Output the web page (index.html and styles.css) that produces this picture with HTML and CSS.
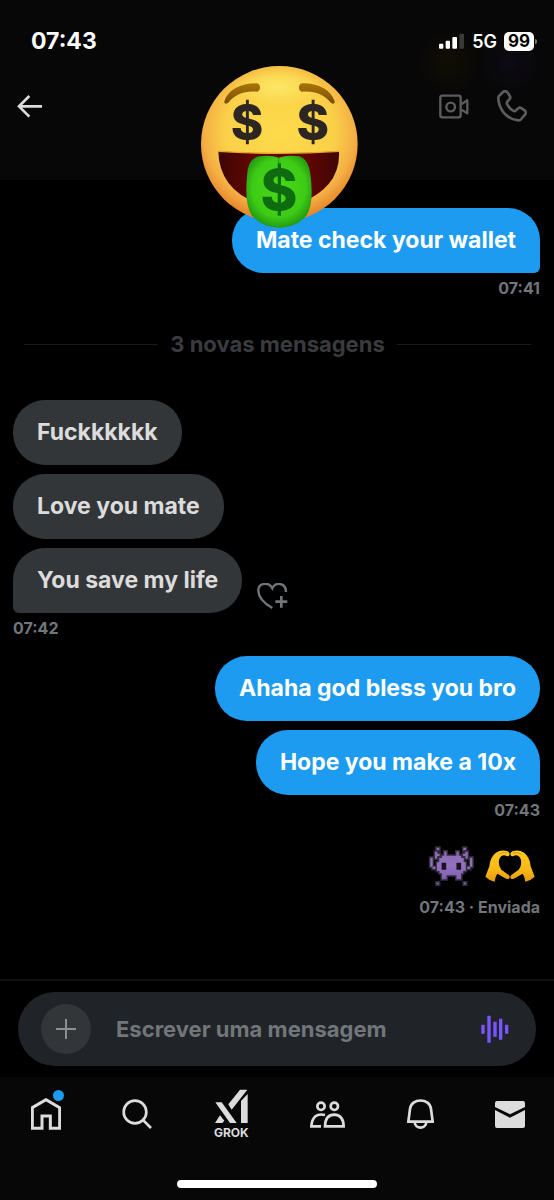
FILE: index.html
```html
<!DOCTYPE html>
<html lang="pt">

<head>
    <meta charset="UTF-8" />
    <meta name="viewport" content="width=device-width, initial-scale=1" />
    <title>Mensagens</title>
    <link rel="stylesheet" href="styles.css">
</head>

<body>

    <header class="top">
        <div class="status-bar">
            <span class="clock">07:43</span>
            <div class="status-right">
                <svg width="26" height="16" viewBox="59 37 78 48" fill="#fff">
                    <rect x="59" y="69" width="13" height="15" rx="3" />
                    <rect x="79" y="60" width="13" height="24" rx="3" />
                    <rect x="99" y="49" width="14" height="35" rx="3" />
                    <rect x="120" y="39" width="14" height="45" rx="3" fill="#3a3a3a" />
                </svg>
                <span class="network">5G</span>
                <span class="battery">99</span>
            </div>
        </div>

        <div class="chat-bar">
            <button class="icon-btn" aria-label="Voltar">
                <svg width="26" height="23" viewBox="48 285 78 69" fill="none" stroke="#dcdcdc" stroke-width="8">
                    <path d="M123 319H56M85 288L54 319L85 350" />
                </svg>
            </button>
            <div class="call-actions">
                <button class="icon-btn" aria-label="Videochamada">
                    <svg width="30" height="25" viewBox="57 221 90 75" fill="none" stroke="#5c5c5c" stroke-width="7" stroke-linejoin="round">
                        <rect x="61" y="226" width="61" height="65" rx="6" />
                        <circle cx="92" cy="260" r="13" />
                        <path d="M124 252L142 240V279L124 268" />
                    </svg>
                </button>
                <button class="icon-btn" aria-label="Chamada de voz">
                    <svg width="30" height="32" viewBox="232 209 90 96" fill="none" stroke="#5c5c5c" stroke-width="8" stroke-linejoin="round">
                        <path d="M238 227L250 215Q257 209 263 216L270 226Q274 232 269 237L263 244Q260 248 263 253Q270 266 280 271Q285 274 289 270L296 264Q300 260 306 264L316 271Q321 277 316 283L305 296Q301 301 295 300Q269 297 252 277Q236 255 236 232Q236 229 238 227Z" />
                    </svg>
                </button>
            </div>
        </div>

        <svg class="avatar" width="157" height="162" viewBox="33 32 471 486" role="img" aria-label="Avatar">
            <defs>
                <radialGradient id="face" cx="50%" cy="42%" r="57%">
                    <stop offset="0" stop-color="#fcdb4a" />
                    <stop offset=".62" stop-color="#fad048" />
                    <stop offset=".84" stop-color="#f4b045" />
                    <stop offset="1" stop-color="#e8862c" />
                </radialGradient>
                <radialGradient id="shine">
                    <stop offset="0" stop-color="#fde766" />
                    <stop offset="1" stop-color="#fde766" stop-opacity="0" />
                </radialGradient>
                <linearGradient id="mouth">
                    <stop offset="0" stop-color="#3c0705" />
                    <stop offset=".3" stop-color="#660503" />
                    <stop offset=".7" stop-color="#660503" />
                    <stop offset="1" stop-color="#3c0705" />
                </linearGradient>
                <linearGradient id="brow" x2="0" y2="1">
                    <stop offset="0" stop-color="#a87507" />
                    <stop offset="1" stop-color="#7d4c05" />
                </linearGradient>
                <radialGradient id="tongue" cy="45%" r="58%">
                    <stop offset="0" stop-color="#48da18" />
                    <stop offset=".7" stop-color="#3ecb16" />
                    <stop offset="1" stop-color="#1f9411" />
                </radialGradient>
            </defs>
            <ellipse cx="268" cy="266" rx="235" ry="234" fill="url(#face)" />
            <ellipse cx="265" cy="95" rx="130" ry="55" fill="url(#shine)" />
            <path d="M103 138C114 103 153 83 201 84C213 87 213 106 202 109C164 105 136 117 117 139C109 148 102 146 103 138Z" fill="url(#brow)" />
            <path d="M434 138C423 103 384 83 336 84C324 87 324 106 335 109C373 105 401 117 420 139C428 148 435 146 434 138Z" fill="url(#brow)" />
            <path d="M85 288Q268 300 447 288Q450 345 416 386Q360 449 268 451Q166 449 115 382Q86 343 85 288Z" fill="url(#mouth)" />
            <path d="M85 288Q268 300 447 288" fill="none" stroke="#e9a42b" stroke-width="4" />
            <path d="M171 362Q173 302 217 302Q246 299 266 307Q287 299 319 302Q354 303 361 356Q373 442 350 480Q320 517 268 517Q213 516 184 478Q163 443 171 362Z" fill="url(#tongue)" />
            <path d="M266 308V350" stroke="#2aa514" stroke-width="4" />
            <text class="dollar" x="171" y="254" text-anchor="middle" font-size="148" fill="#2c2521">$</text>
            <text class="dollar" x="368" y="254" text-anchor="middle" font-size="148" fill="#2c2521">$</text>
            <text class="dollar" x="267" y="463" text-anchor="middle" font-size="168" fill="#0e6b10">$</text>
        </svg>
    </header>

    <main class="chat">
        <div class="group mine">
            <div class="bubble tail">Mate check your wallet</div>
            <div class="time">07:41</div>
        </div>

        <div class="divider">3 novas mensagens</div>

        <div class="group theirs">
            <div class="bubble">Fuckkkkkk</div>
            <div class="bubble">Love you mate</div>
            <div class="bubble-row">
                <div class="bubble tail">You save my life</div>
                <button class="icon-btn react" aria-label="Reagir">
                    <svg width="31" height="27" viewBox="770 578 93 81" fill="none" stroke="#71767b" stroke-width="7">
                        <path d="M816 653Q775 630 774 602C773 577 806 573 816 594C825 574 857 576 857 605" />
                        <path d="M843 617V652M825 634H861" stroke-width="8" />
                    </svg>
                </button>
            </div>
            <div class="time">07:42</div>
        </div>

        <div class="group mine">
            <div class="bubble">Ahaha god bless you bro</div>
            <div class="bubble tail">Hope you make a 10x</div>
            <div class="time">07:43</div>
        </div>

        <div class="group mine">
            <div class="emojis">
                <svg width="49" height="40" viewBox="35 37 148 120" role="img" aria-label="Alien">
                    <defs>
                        <linearGradient id="alien" gradientUnits="userSpaceOnUse" x1="0" y1="40" x2="0" y2="150">
                            <stop offset="0" stop-color="#8a66b4" />
                            <stop offset=".5" stop-color="#9272c0" />
                            <stop offset="1" stop-color="#7d59ae" />
                        </linearGradient>
                    </defs>
                    <g fill="url(#alien)" stroke="#332d3b" stroke-width="9" paint-order="stroke">
                        <path d="M64 42H72V50H64ZM145 42H153V50H145ZM64 147H71V153H64ZM146 147H153V153H146Z" />
                        <path d="M59 54H66V60H73V67H66V74H59ZM158 54H151V60H144V67H151V74H158Z" />
                        <path d="M45 72H52V99H64V106H52V99H45ZM172 72H165V99H153V106H165V99H172Z" />
                        <path d="M87 53H94V66H124V53H131V66H138V73H146V86H152V112H144V119H138V137H124V125H94V137H80V119H73V112H65V86H72V73H80V66H87Z" />
                    </g>
                    <path d="M79 87H93V108H79ZM124 87H138V108H124Z" fill="#191320" />
                </svg>
                <svg width="52" height="34" viewBox="6 12 156 102" role="img" aria-label="Mãos em coração">
                    <defs>
                        <linearGradient id="handFill" x2="0" y2="1">
                            <stop offset="0" stop-color="#ffca20" />
                            <stop offset=".6" stop-color="#f9b917" />
                            <stop offset="1" stop-color="#e9990f" />
                        </linearGradient>
                        <g id="hand">
                            <path d="M10 95L22 64Q24 36 42 23Q58 12 77 19Q85 24 82 31Q79 36 72 32Q58 28 52 42Q47 60 58 74L80 90Q86 96 81 101Q76 104 67 98L46 86Q40 94 38 110Q22 107 10 95Z" fill="url(#handFill)" />
                            <path d="M50 28Q61 20 76 24" fill="none" stroke="#dd940e" stroke-width="3" />
                        </g>
                    </defs>
                    <use href="#hand" />
                    <use href="#hand" transform="translate(168) scale(-1 1)" />
                </svg>
            </div>
            <div class="time">07:43 · Enviada</div>
        </div>
    </main>

    <form class="composer">
        <div class="composer-box">
            <button type="button" class="plus" aria-label="Adicionar">
                <svg width="20" height="20" viewBox="0 0 20 20" stroke="#8b8e92" stroke-width="2">
                    <path d="M10 0V20M0 10H20" />
                </svg>
            </button>
            <input type="text" placeholder="Escrever uma mensagem" aria-label="Escrever uma mensagem" />
            <button type="button" class="icon-btn" aria-label="Mensagem de voz">
                <svg width="28" height="28" viewBox="612 133 84 84" stroke="#7856ff" stroke-width="10">
                    <path d="M618 162V189M636 135V216M654 153V198M671 144V207M689 162V189" />
                </svg>
            </button>
        </div>
    </form>

    <footer class="bottom">
        <nav class="tabs">
            <a href="#" class="tab" aria-label="Início">
                <span class="home">
                    <svg width="30" height="32" viewBox="93 379 90 96" fill="none" stroke="#dcdcdc" stroke-width="9">
                        <path d="M97 408L138 384L179 408V470H151V433H126V470H97Z" />
                    </svg>
                    <span class="dot"></span>
                </span>
            </a>
            <a href="#" class="tab" aria-label="Pesquisar">
                <svg width="30" height="30" viewBox="372 383 90 90" fill="none" stroke="#dcdcdc" stroke-width="8">
                    <circle cx="411" cy="422" r="34" />
                    <path d="M436 447L459 470" />
                </svg>
            </a>
            <a href="#" class="tab grok">
                <svg width="33" height="35" viewBox="649 359 99 105" fill="#dcdcdc">
                    <path d="M650 399H669L714 461H694ZM664 438L677 454L671 461H649ZM724 361H746L699 421L689 405ZM727 395L747 374V461H727Z" />
                </svg>
                <span>GROK</span>
            </a>
            <a href="#" class="tab" aria-label="Comunidades">
                <svg width="35" height="27" viewBox="93 389 105 81" fill="none" stroke="#dcdcdc" stroke-width="8">
                    <circle cx="126" cy="405" r="11" />
                    <circle cx="166" cy="405" r="11" />
                    <path d="M138 431Q101 422 97 465H126" />
                    <path d="M138 465Q139 430 166 430Q193 431 194 465Z" />
                </svg>
            </a>
            <a href="#" class="tab" aria-label="Notificações">
                <svg width="27" height="30" viewBox="384 384 81 90" fill="none" stroke="#dcdcdc" stroke-width="8">
                    <path d="M388 452L393 414C396 380 453 380 456 414L461 452Z" />
                    <path d="M407 454C409 475 440 475 442 454" />
                </svg>
            </a>
            <a href="#" class="tab" aria-label="Mensagens">
                <svg width="30" height="27" viewBox="653 389 90 81" fill="#dcdcdc">
                    <path d="M653 407V395Q653 389 659 389H737Q743 389 743 395V407L698 429ZM653 416L698 439L743 416V464Q743 470 737 470H659Q653 470 653 464Z" />
                </svg>
            </a>
        </nav>
        <div class="home-indicator"></div>
    </footer>

</body>

</html>
```
FILE: styles.css
```css
* {
    box-sizing: border-box;
}

body {
    margin: 0;
    min-height: 100vh;
    display: flex;
    flex-direction: column;
    background: #000;
    color: #fff;
    font-family: Inter, "Liberation Sans", sans-serif;
    font-weight: 700;
}

svg {
    display: block;
}

button {
    padding: 0;
    border: none;
    background: none;
    cursor: pointer;
}

/* header */
.top {
    position: relative;
    height: 180px;
    padding-top: 24px;
    background:
        radial-gradient(circle at 81% 62px, #110e03, transparent 32px),
        radial-gradient(circle at 92% 62px, #0d0a14, transparent 32px),
        #070707;
}

.status-bar {
    display: flex;
    justify-content: space-between;
    align-items: center;
    height: 34px;
    padding: 0 20px 0 31px;
}

.clock {
    font-size: 23px;
}

.status-right {
    display: flex;
    align-items: center;
    gap: 7px;
}

.network {
    font-size: 18px;
    font-weight: 600;
}

.battery {
    position: relative;
    width: 30px;
    height: 19px;
    border-radius: 5px;
    background: #fff;
    color: #000;
    font-size: 17px;
    line-height: 19px;
    text-align: center;
}

.battery::after {
    content: "";
    position: absolute;
    top: 7px;
    right: -3px;
    width: 2px;
    height: 5px;
    border-radius: 0 2px 2px 0;
    background: #777;
}

.chat-bar {
    display: flex;
    justify-content: space-between;
    align-items: center;
    height: 96px;
    padding: 0 27px 0 17px;
}

.call-actions {
    display: flex;
    align-items: center;
    gap: 28px;
}

.avatar {
    position: absolute;
    top: 66px;
    left: 50%;
    margin-left: -76px;
    z-index: 1;
}

.dollar {
    font-family: Inter, sans-serif;
    font-weight: 800;
}

/* messages */
.chat {
    flex: 1;
    padding: 28px 14px 0 13px;
}

.group {
    display: flex;
    flex-direction: column;
    align-items: flex-start;
    gap: 9px;
    margin-bottom: 18px;
}

.mine {
    align-items: flex-end;
}

.bubble {
    padding: 18px 24px 19px;
    border-radius: 32px;
    background: #333639;
    color: #dcdcdc;
    font-size: 23px;
    line-height: 28px;
}

.mine .bubble {
    background: #1d9bf0;
    color: #fff;
}

.theirs .tail {
    border-bottom-left-radius: 6px;
}

.mine .tail {
    border-bottom-right-radius: 6px;
}

.bubble-row {
    display: flex;
    align-items: flex-end;
    gap: 15px;
}

.react {
    margin-bottom: 3px;
}

.time {
    margin-top: -4px;
    color: #71767b;
    font-size: 16px;
    line-height: 20px;
}

.divider {
    display: flex;
    align-items: center;
    gap: 12px;
    margin: 32px 9px 42px 11px;
    color: #3a3b3e;
    font-size: 22px;
    line-height: 28px;
}

.divider::before,
.divider::after {
    content: "";
    flex: 1;
    height: 1px;
    background: #191a1c;
}

.emojis {
    display: flex;
    align-items: center;
    gap: 8px;
    margin: 8px 4px 6px 0;
}

/* message box */
.composer {
    padding: 11px 18px;
    border-top: 2px solid #101112;
}

.composer-box {
    display: flex;
    align-items: center;
    height: 74px;
    padding: 0 27px 0 23px;
    border-radius: 37px;
    background: #202327;
}

.plus {
    display: flex;
    align-items: center;
    justify-content: center;
    width: 50px;
    height: 50px;
    border-radius: 50%;
    background: #333639;
}

.composer input {
    flex: 1;
    min-width: 0;
    padding: 0 0 0 25px;
    border: none;
    outline: none;
    background: none;
    color: #fff;
    font: inherit;
    font-size: 22px;
}

.composer input::placeholder {
    color: #71767b;
    opacity: 1;
}

/* tab bar */
.bottom {
    padding: 12px 0;
    background: #070707;
}

.tabs {
    display: flex;
    justify-content: space-between;
    align-items: center;
    height: 50px;
    padding: 0 29px 0 31px;
}

.tab {
    display: flex;
    flex-direction: column;
    align-items: center;
    color: #dcdcdc;
    text-decoration: none;
}

.grok {
    gap: 2px;
    font-size: 12px;
    line-height: 14px;
}

.home {
    position: relative;
}

.dot {
    position: absolute;
    top: -8px;
    right: -3px;
    width: 11px;
    height: 11px;
    border-radius: 50%;
    background: #1d9bf0;
}

.home-indicator {
    width: 36%;
    height: 8px;
    margin: 41px auto 0;
    border-radius: 4px;
    background: #fff;
}
```
